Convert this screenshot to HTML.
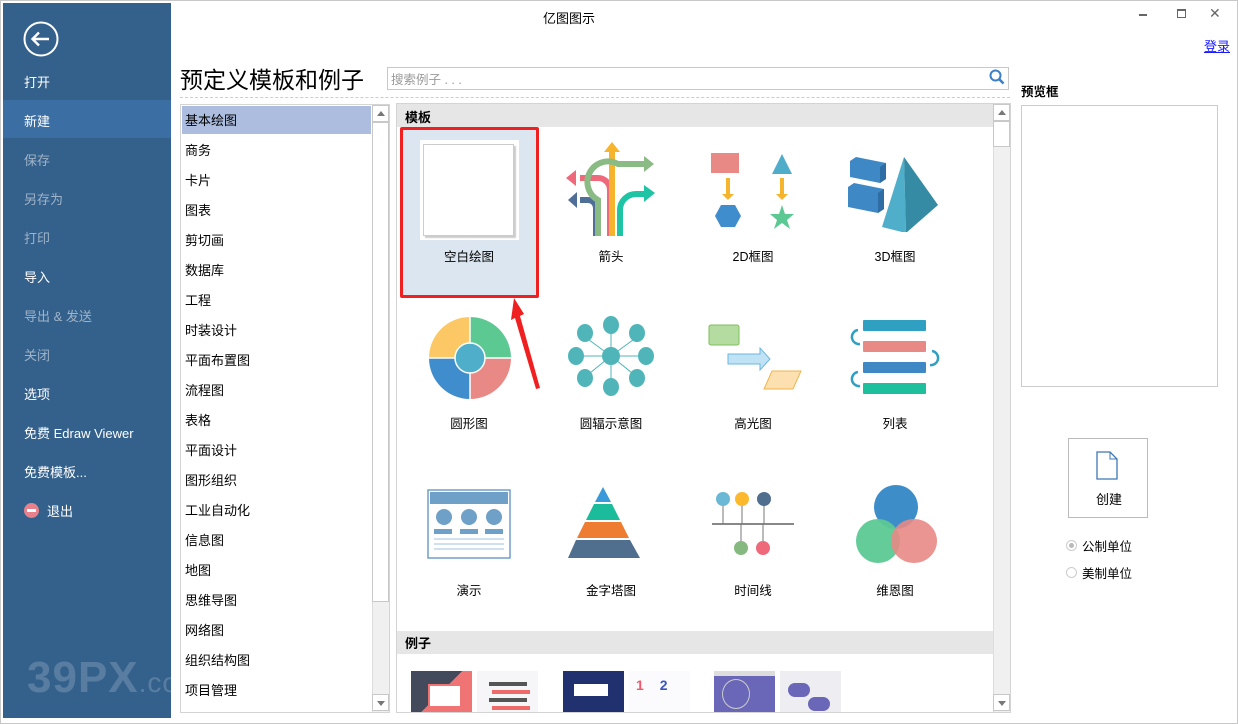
<!DOCTYPE html>
<html><head><meta charset="utf-8"><style>
*{margin:0;padding:0;box-sizing:border-box}
body{width:1238px;height:724px;overflow:hidden;background:#fff;font-family:"Liberation Sans","Noto Sans CJK SC",sans-serif;font-size:13px;color:#000;position:relative}
.a{position:absolute}
#win{left:0;top:0;width:1238px;height:724px;border:1px solid #c8c8c8}
#side{left:3px;top:3px;width:168px;height:715px;background:#34618c;overflow:hidden}
.si{position:absolute;left:21px;color:#fff;font-size:13px}
.si.d{color:#9fb3c8}
.li{position:absolute;left:185px;font-size:13px}
.lab{position:absolute;width:142px;text-align:center;font-size:12.5px}
.sb{background:#f0f0f0;border-left:1px solid #ddd}
.btn{position:absolute;width:17px;height:17px;border:1px solid #c8c8c8;background:#fff}
.up:after,.dn:after{content:"";position:absolute;left:4px;border-left:4px solid transparent;border-right:4px solid transparent}
.up:after{top:5px;border-bottom:5px solid #777}
.dn:after{top:6px;border-top:5px solid #777}
</style></head><body>
<div class="a" id="win"></div>
<div class="a" id="side">
<svg class="a" style="left:19px;top:17px" width="38" height="38" viewBox="0 0 38 38"><circle cx="19" cy="19" r="16.5" fill="none" stroke="#fff" stroke-width="2"/><path d="M27 19H11M17 12.5L10.5 19L17 25.5" fill="none" stroke="#fff" stroke-width="2.4"/></svg>
<div class="a" style="left:0;top:97px;width:168px;height:38px;background:#3b6ea3"></div>
<div class="si" style="top:69px">打开</div>
<div class="si" style="top:108px">新建</div>
<div class="si d" style="top:147px">保存</div>
<div class="si d" style="top:186px">另存为</div>
<div class="si d" style="top:225px">打印</div>
<div class="si" style="top:264px">导入</div>
<div class="si d" style="top:303px">导出 &amp; 发送</div>
<div class="si d" style="top:342px">关闭</div>
<div class="si" style="top:381px">选项</div>
<div class="si" style="top:420px">免费 Edraw Viewer</div>
<div class="si" style="top:459px">免费模板...</div>
<div class="a" style="left:21px;top:500px;width:15px;height:15px;border-radius:50%;background:#e8818b"></div>
<div class="a" style="left:24px;top:506px;width:9px;height:3px;background:#fff"></div>
<div class="si" style="top:498px;left:44px">退出</div>
<div class="a" style="left:24px;top:650px;font-size:44px;font-weight:bold;color:rgba(255,255,255,0.18);letter-spacing:1px;white-space:nowrap">39PX<span style="font-size:28px;font-weight:normal">.coM</span></div>
</div>
<div class="a" style="left:543px;top:8px;font-size:13px">亿图图示</div>
<div class="a" style="left:1139px;top:14px;width:8px;height:2px;background:#666"></div>
<div class="a" style="left:1177px;top:9px;width:9px;height:9px;border:1px solid #666;border-top-width:2px"></div>
<div class="a" style="left:1209px;top:5px;font-size:14px;color:#666">✕</div>
<div class="a" style="left:1204px;top:36px;color:#1a1aff;font-size:13px;text-decoration:underline">登录</div>
<div class="a" style="left:180px;top:61px;font-size:23px">预定义模板和例子</div>
<div class="a" style="left:387px;top:67px;width:622px;height:23px;border:1px solid #c8c8c8"></div>
<div class="a" style="left:391px;top:69px;color:#999;font-size:12.5px">搜索例子 . . .</div>
<svg class="a" style="left:989px;top:69px" width="16" height="16"><circle cx="6.5" cy="6.5" r="5" fill="none" stroke="#3b7fc4" stroke-width="2"/><path d="M10 10L14.5 14.5" stroke="#3b7fc4" stroke-width="2.6"/></svg>
<div class="a" style="left:180px;top:97px;width:830px;border-top:1px dashed #ccc"></div>
<!-- list -->
<div class="a" style="left:180px;top:104px;width:210px;height:609px;border:1px solid #d4d4d4"></div>
<div class="a" style="left:182px;top:106px;width:189px;height:28px;background:#adbddf"></div>
<div class="a sb" style="left:372px;top:105px;width:17px;height:607px"></div>
<div class="btn up" style="left:372px;top:105px"></div>
<div class="a" style="left:372px;top:122px;width:17px;height:480px;border:1px solid #c8c8c8;background:#fff"></div>
<div class="btn dn" style="left:372px;top:694px"></div>
<div class="li" style="top:110px">基本绘图</div>
<div class="li" style="top:140px">商务</div>
<div class="li" style="top:170px">卡片</div>
<div class="li" style="top:200px">图表</div>
<div class="li" style="top:230px">剪切画</div>
<div class="li" style="top:260px">数据库</div>
<div class="li" style="top:290px">工程</div>
<div class="li" style="top:320px">时装设计</div>
<div class="li" style="top:350px">平面布置图</div>
<div class="li" style="top:380px">流程图</div>
<div class="li" style="top:410px">表格</div>
<div class="li" style="top:440px">平面设计</div>
<div class="li" style="top:470px">图形组织</div>
<div class="li" style="top:500px">工业自动化</div>
<div class="li" style="top:530px">信息图</div>
<div class="li" style="top:560px">地图</div>
<div class="li" style="top:590px">思维导图</div>
<div class="li" style="top:620px">网络图</div>
<div class="li" style="top:650px">组织结构图</div>
<div class="li" style="top:680px">项目管理</div>
<!-- main -->
<div class="a" style="left:396px;top:103px;width:615px;height:610px;border:1px solid #d4d4d4"></div>
<div class="a" style="left:397px;top:104px;width:596px;height:23px;background:#e6e6e6"></div>
<div class="a" style="left:405px;top:107px;font-weight:bold;font-size:13px">模板</div>
<div class="a" style="left:397px;top:631px;width:596px;height:23px;background:#e6e6e6"></div>
<div class="a" style="left:405px;top:633px;font-weight:bold;font-size:13px">例子</div>
<div class="a sb" style="left:993px;top:104px;width:17px;height:608px"></div>
<div class="btn up" style="left:993px;top:104px"></div>
<div class="a" style="left:993px;top:121px;width:17px;height:26px;border:1px solid #c8c8c8;background:#fff"></div>
<div class="btn dn" style="left:993px;top:694px"></div>
<div class="a" style="left:400px;top:127px;width:139px;height:171px;background:#dce6f1;border:3px solid #f02020;border-radius:2px"></div>
<div class="a" style="left:420px;top:140px;width:99px;height:100px;background:#fff"></div>
<div class="a" style="left:423px;top:144px;width:91px;height:92px;border:1px solid #ccc;box-shadow:2px 2px 1px #ccc;background:#fff"></div>
<svg class="a" style="left:500px;top:296px" width="45" height="98"><path d="M14 2L24 18L20 20L40 92L36 93L15 22L11 24Z" fill="#f02020"/></svg>
<!-- icons row1 -->
<svg class="a" style="left:562px;top:140px" width="100" height="96">
<path d="M18 38H36A12 12 0 0 1 48 50V96" fill="none" stroke="#ee6a7b" stroke-width="6"/><path d="M4 38L14 30V46Z" fill="#ee6a7b"/>
<path d="M18 60H26A8 8 0 0 1 34 68V96" fill="none" stroke="#4f6f96" stroke-width="6"/><path d="M6 60L15 52V68Z" fill="#4f6f96"/>
<path d="M50 96V10" stroke="#f6b42c" stroke-width="6"/><path d="M42 12L50 2L58 12Z" fill="#f6b42c"/>
<path d="M36 96V60A20 20 0 0 1 56 24H82" fill="none" stroke="#8bbb84" stroke-width="6"/><path d="M82 16L92 24L82 32Z" fill="#8bbb84"/>
<path d="M58 96V70A16 16 0 0 1 74 54H84" fill="none" stroke="#1fc4a4" stroke-width="6"/><path d="M82 45L93 53L82 62Z" fill="#1fc4a4"/>
</svg>
<svg class="a" style="left:706px;top:150px" width="95" height="82">
<rect x="5" y="3" width="28" height="20" fill="#e88985"/><rect x="20" y="28" width="4" height="18" fill="#f6b42c"/><path d="M16 44H28L22 50Z" fill="#f6b42c"/>
<path d="M9 66L15 55H29L35 66L29 77H15Z" fill="#3f8dcc"/>
<path d="M76 4L86 24H66Z" fill="#4fadc9"/><rect x="74" y="28" width="4" height="18" fill="#f6b42c"/><path d="M70 44H82L76 50Z" fill="#f6b42c"/>
<path d="M76 55L79 64L88 64L81 70L84 79L76 73L68 79L71 70L64 64L73 64Z" fill="#5cc993"/></svg>
<svg class="a" style="left:848px;top:157px" width="95" height="75">
<path d="M2 4L8 0L38 6V22L32 26L2 20Z" fill="#3f88c6"/><path d="M32 10V26L38 22V6Z" fill="#2e6ea5"/>
<path d="M0 30L6 26L36 32V52L30 56L0 50Z" fill="#3f88c6"/><path d="M30 36V56L36 52V32Z" fill="#2e6ea5"/>
<path d="M56 0L34 70L58 76Z" fill="#4faec9"/><path d="M56 0L58 76L90 48Z" fill="#348ba3"/></svg>
<!-- row2 -->
<svg class="a" style="left:427px;top:315px" width="86" height="86"><path d="M43 43V2A41 41 0 0 1 84 43Z" fill="#5cc993"/><path d="M43 43H84A41 41 0 0 1 43 84Z" fill="#e88985"/><path d="M43 43V84A41 41 0 0 1 2 43Z" fill="#3f8dcc"/><path d="M43 43H2A41 41 0 0 1 43 2Z" fill="#fcc865"/><path d="M43 2V84M2 43H84" stroke="#fff" stroke-width="1.5"/><circle cx="43" cy="43" r="15" fill="#4faec9" stroke="#fff" stroke-width="1.5"/></svg>
<svg class="a" style="left:567px;top:315px" width="88" height="82"><g stroke="#4fb5b8" stroke-width="1"><path d="M44 41L44 10M44 41L70 22M44 41L80 41M44 41L70 62M44 41L44 74M44 41L18 62M44 41L10 41M44 41L18 22"/></g><g fill="#4fb5b8"><ellipse cx="44" cy="41" rx="9" ry="9"/><ellipse cx="44" cy="10" rx="8" ry="9"/><ellipse cx="70" cy="18" rx="8" ry="9"/><ellipse cx="79" cy="41" rx="8" ry="9"/><ellipse cx="70" cy="63" rx="8" ry="9"/><ellipse cx="44" cy="72" rx="8" ry="9"/><ellipse cx="18" cy="63" rx="8" ry="9"/><ellipse cx="9" cy="41" rx="8" ry="9"/><ellipse cx="18" cy="18" rx="8" ry="9"/></g></svg>
<svg class="a" style="left:708px;top:323px" width="95" height="70"><rect x="1" y="2" width="30" height="20" rx="2" fill="#b5dca0" stroke="#7cbf5b"/><path d="M20 31H52V25L62 36L52 47V41H20Z" fill="#bfe2f4" stroke="#6bb7e0"/><path d="M64 48H93L85 66H56Z" fill="#fde0b0" stroke="#f0b44c"/></svg>
<svg class="a" style="left:848px;top:318px" width="96" height="80"><rect x="15" y="2" width="63" height="11" rx="1" fill="#2f9fc2"/><rect x="15" y="23" width="63" height="11" rx="1" fill="#e88985"/><rect x="15" y="44" width="63" height="11" rx="1" fill="#3f88c6"/><rect x="15" y="65" width="63" height="11" rx="1" fill="#1dbf9c"/><path d="M10 12A6 6 0 0 0 12 26M84 33A6 6 0 0 1 82 47M10 54A6 6 0 0 0 12 68" fill="none" stroke="#2f9fc2" stroke-width="2.5"/></svg>
<!-- row3 -->
<svg class="a" style="left:427px;top:489px" width="86" height="72"><rect x="1" y="1" width="82" height="68" fill="#fff" stroke="#6fa0c8" stroke-width="1.5"/><rect x="3" y="3" width="78" height="12" fill="#6fa0c8"/><g fill="#6fa0c8"><circle cx="17" cy="28" r="8"/><circle cx="42" cy="28" r="8"/><circle cx="67" cy="28" r="8"/><rect x="7" y="40" width="18" height="5"/><rect x="33" y="40" width="18" height="5"/><rect x="58" y="40" width="18" height="5"/></g><g fill="#cfe0ee"><rect x="7" y="49" width="70" height="2"/><rect x="7" y="54" width="70" height="2"/><rect x="7" y="59" width="70" height="2"/></g></svg>
<svg class="a" style="left:568px;top:486px" width="86" height="76"><path d="M35 1L43 16H27Z" fill="#3a9ad9"/><path d="M26 18H44L52 34H18Z" fill="#1abc9c"/><path d="M17 36H53L61 52H9Z" fill="#ee7d32"/><path d="M8 54H62L72 72H0Z" fill="#506e8e"/></svg>
<svg class="a" style="left:712px;top:490px" width="82" height="68"><path d="M0 34H82" stroke="#888" stroke-width="2"/><path d="M11 10V34M30 10V34M52 10V34M29 34V58M51 34V58" stroke="#777"/><circle cx="11" cy="9" r="7" fill="#6bb8d4"/><circle cx="30" cy="9" r="7" fill="#fdb92e"/><circle cx="52" cy="9" r="7" fill="#506e8e"/><circle cx="29" cy="58" r="7" fill="#86b97f"/><circle cx="51" cy="58" r="7" fill="#ee6a7b"/></svg>
<svg class="a" style="left:852px;top:484px" width="90" height="80"><ellipse cx="44" cy="23" rx="22" ry="22" fill="#3d8dc9"/><ellipse cx="26" cy="57" rx="22" ry="22" fill="#5cc993" opacity=".95"/><ellipse cx="62" cy="57" rx="23" ry="22" fill="#e88985" opacity=".9"/></svg>
<div class="lab" style="left:398px;top:246px">空白绘图</div>
<div class="lab" style="left:540px;top:246px">箭头</div>
<div class="lab" style="left:682px;top:246px">2D框图</div>
<div class="lab" style="left:824px;top:246px">3D框图</div>
<div class="lab" style="left:398px;top:413px">圆形图</div>
<div class="lab" style="left:540px;top:413px">圆辐示意图</div>
<div class="lab" style="left:682px;top:413px">高光图</div>
<div class="lab" style="left:824px;top:413px">列表</div>
<div class="lab" style="left:398px;top:580px">演示</div>
<div class="lab" style="left:540px;top:580px">金字塔图</div>
<div class="lab" style="left:682px;top:580px">时间线</div>
<div class="lab" style="left:824px;top:580px">维恩图</div>
<!-- examples -->
<div class="a" style="left:411px;top:671px;width:61px;height:41px;background:linear-gradient(135deg,#434a5c 50%,#ef7473 50%)"></div>
<div class="a" style="left:428px;top:684px;width:34px;height:24px;background:#fff;border:2px solid #ef7473"></div>
<div class="a" style="left:477px;top:671px;width:61px;height:41px;background:#f6f6f8"></div>
<div class="a" style="left:489px;top:682px;width:38px;height:4px;background:#555"></div>
<div class="a" style="left:492px;top:690px;width:38px;height:4px;background:#ef6a6a"></div>
<div class="a" style="left:489px;top:698px;width:38px;height:4px;background:#555"></div>
<div class="a" style="left:492px;top:706px;width:38px;height:4px;background:#ef6a6a"></div>
<div class="a" style="left:563px;top:671px;width:61px;height:41px;background:#21306e"></div>
<div class="a" style="left:574px;top:684px;width:34px;height:12px;background:#fff"></div>
<div class="a" style="left:629px;top:671px;width:61px;height:41px;background:#fbfbfd;color:#ef5a6a;font-weight:bold;font-size:14px;padding:6px 0 0 7px">1 <span style="color:#3a56c4;margin-left:12px">2</span></div>
<div class="a" style="left:714px;top:671px;width:61px;height:41px;background:#6a67b8;border-top:5px solid #ddd"></div>
<div class="a" style="left:722px;top:679px;width:28px;height:30px;border-radius:50%;border:1px solid #ccc"></div>
<div class="a" style="left:780px;top:671px;width:61px;height:41px;background:#eeeef2"></div>
<div class="a" style="left:788px;top:683px;width:22px;height:14px;border-radius:7px;background:#6a67b8"></div>
<div class="a" style="left:808px;top:697px;width:22px;height:14px;border-radius:7px;background:#6a67b8"></div>
<!-- right -->
<div class="a" style="left:1021px;top:81px;font-weight:bold;font-size:12.5px">预览框</div>
<div class="a" style="left:1021px;top:105px;width:197px;height:282px;border:1px solid #ccc"></div>
<div class="a" style="left:1068px;top:438px;width:80px;height:80px;border:1px solid #bbb"></div>
<svg class="a" style="left:1095px;top:450px" width="26" height="32"><path d="M2 2H15L22 9V29H2Z" fill="#fff" stroke="#3c78b5" stroke-width="1.3"/><path d="M15 2V9H22" fill="none" stroke="#3c78b5" stroke-width="1"/></svg>
<div class="a" style="left:1096px;top:489px;font-size:13px">创建</div>
<div class="a" style="left:1066px;top:540px;width:11px;height:11px;border-radius:50%;border:1px solid #ccc"></div>
<div class="a" style="left:1069px;top:543px;width:5px;height:5px;border-radius:50%;background:#bbb"></div>
<div class="a" style="left:1082px;top:536px;font-size:12.5px">公制单位</div>
<div class="a" style="left:1066px;top:567px;width:11px;height:11px;border-radius:50%;border:1px solid #ccc"></div>
<div class="a" style="left:1082px;top:563px;font-size:12.5px">美制单位</div>
</body></html>
